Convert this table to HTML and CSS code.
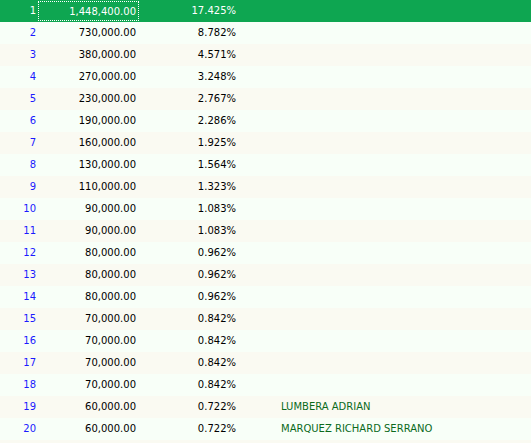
FILE: index.html
```html
<!DOCTYPE html>
<html>
<head>
<meta charset="utf-8">
<link rel="stylesheet" href="styles.css">
</head>
<body>
<div class="grid">
  <div class="row sel"><span class="idx">1</span><span class="num"><span class="focus">1,448,400.00</span></span><span class="pct">17.425%</span><span class="name"></span></div>
  <div class="row"><span class="idx">2</span><span class="num">730,000.00</span><span class="pct">8.782%</span><span class="name"></span></div>
  <div class="row"><span class="idx">3</span><span class="num">380,000.00</span><span class="pct">4.571%</span><span class="name"></span></div>
  <div class="row"><span class="idx">4</span><span class="num">270,000.00</span><span class="pct">3.248%</span><span class="name"></span></div>
  <div class="row"><span class="idx">5</span><span class="num">230,000.00</span><span class="pct">2.767%</span><span class="name"></span></div>
  <div class="row"><span class="idx">6</span><span class="num">190,000.00</span><span class="pct">2.286%</span><span class="name"></span></div>
  <div class="row"><span class="idx">7</span><span class="num">160,000.00</span><span class="pct">1.925%</span><span class="name"></span></div>
  <div class="row"><span class="idx">8</span><span class="num">130,000.00</span><span class="pct">1.564%</span><span class="name"></span></div>
  <div class="row"><span class="idx">9</span><span class="num">110,000.00</span><span class="pct">1.323%</span><span class="name"></span></div>
  <div class="row"><span class="idx">10</span><span class="num">90,000.00</span><span class="pct">1.083%</span><span class="name"></span></div>
  <div class="row"><span class="idx">11</span><span class="num">90,000.00</span><span class="pct">1.083%</span><span class="name"></span></div>
  <div class="row"><span class="idx">12</span><span class="num">80,000.00</span><span class="pct">0.962%</span><span class="name"></span></div>
  <div class="row"><span class="idx">13</span><span class="num">80,000.00</span><span class="pct">0.962%</span><span class="name"></span></div>
  <div class="row"><span class="idx">14</span><span class="num">80,000.00</span><span class="pct">0.962%</span><span class="name"></span></div>
  <div class="row"><span class="idx">15</span><span class="num">70,000.00</span><span class="pct">0.842%</span><span class="name"></span></div>
  <div class="row"><span class="idx">16</span><span class="num">70,000.00</span><span class="pct">0.842%</span><span class="name"></span></div>
  <div class="row"><span class="idx">17</span><span class="num">70,000.00</span><span class="pct">0.842%</span><span class="name"></span></div>
  <div class="row"><span class="idx">18</span><span class="num">70,000.00</span><span class="pct">0.842%</span><span class="name"></span></div>
  <div class="row"><span class="idx">19</span><span class="num">60,000.00</span><span class="pct">0.722%</span><span class="name">LUMBERA ADRIAN</span></div>
  <div class="row"><span class="idx">20</span><span class="num">60,000.00</span><span class="pct">0.722%</span><span class="name">MARQUEZ RICHARD SERRANO</span></div>
  <div class="row"><span class="idx"></span><span class="num"></span><span class="pct"></span><span class="name"></span></div>
</div>
</body>
</html>
```

FILE: styles.css
```css
html, body {
  margin: 0;
  padding: 0;
  background: #f8fff8;
  overflow: hidden;
}
.grid {
  display: flex;
  flex-direction: column;
  font-family: "DejaVu Sans", Verdana, sans-serif;
  font-size: 10px;
  color: #000;
}
.row {
  display: grid;
  grid-template-columns: 38px 101px 100px 1fr;
  height: 22px;
  line-height: 22px;
  background: #f8fff8;
}
.row:nth-child(odd) {
  background: #fafaf2;
}
.row.sel {
  background: #0ea651;
  color: #fff;
}
.idx {
  text-align: right;
  padding-right: 2px;
  color: #1a1aff;
}
.sel .idx { color: #fff; }
.num {
  text-align: right;
  padding-right: 3px;
}
.pct {
  text-align: right;
  padding-right: 3px;
}
.name {
  padding-left: 42px;
  color: #0b6a1c;
}
.sel .num {
  padding: 0;
  display: flex;
  padding-top: 1px;
  height: 20px;
}
.focus {
  flex: 1;
  border: 1px dotted #fff;
  text-align: right;
  padding-right: 2px;
  line-height: 19px;
}
```
